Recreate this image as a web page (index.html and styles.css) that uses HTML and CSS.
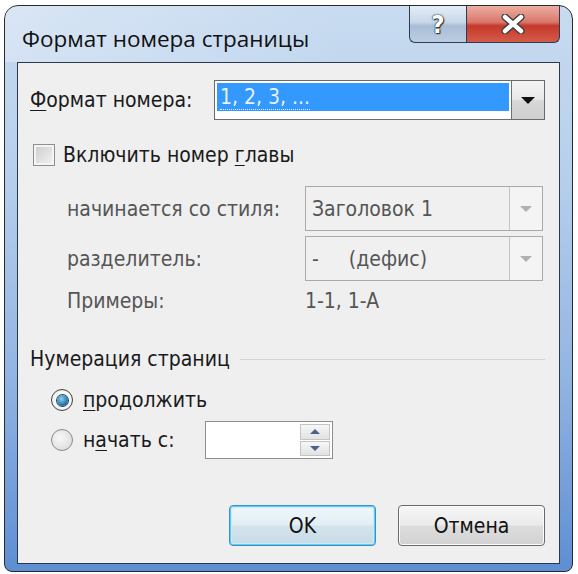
FILE: index.html
```html
<!DOCTYPE html>
<html lang="ru">
<head>
    <meta charset="UTF-8">
    <title>Формат номера страницы</title>
    <link rel="stylesheet" href="styles.css">
</head>
<body>
    <div class="window">
        <div class="titlebar">
            <div class="title">Формат номера страницы</div>
            <div class="caption-buttons">
                <div class="cap-btn help">?</div>
                <div class="cap-btn close">
                    <svg width="26" height="20" viewBox="0 0 26 20">
                        <path d="M5 3 L21 17 M21 3 L5 17" stroke="#3a3a3a" stroke-width="7" stroke-linecap="round"/>
                        <path d="M5 3 L21 17 M21 3 L5 17" stroke="#ffffff" stroke-width="4.5" stroke-linecap="round"/>
                    </svg>
                </div>
            </div>
        </div>
        <div class="panel">
            <div class="format-row">
                <span class="label"><u>Ф</u>ормат номера:</span>
                <div class="combo combo-active">
                    <div class="combo-value"><span class="focus-text">1, 2, 3, ...</span></div>
                    <div class="combo-btn"><span class="tri"></span></div>
                </div>
            </div>

            <div class="check-row">
                <span class="checkbox"></span>
                <span>Включить номер <u>г</u>лавы</span>
            </div>

            <div class="sub-grid">
                <span class="muted">начинается со стиля:</span>
                <div class="combo combo-disabled">
                    <div class="combo-value">Заголовок 1</div>
                    <div class="combo-btn"><span class="tri"></span></div>
                </div>
                <span class="muted">разделитель:</span>
                <div class="combo combo-disabled">
                    <div class="combo-value">-&nbsp;&nbsp;&nbsp;&nbsp;&nbsp;(дефис)</div>
                    <div class="combo-btn"><span class="tri"></span></div>
                </div>
                <span class="muted example-row">Примеры:</span>
                <span class="muted example-row">1-1, 1-A</span>
            </div>

            <div class="group-title">
                <span>Нумерация страниц</span>
                <span class="group-line"></span>
            </div>

            <div class="radio-row first">
                <span class="radio checked"></span>
                <span><u>п</u>родолжить</span>
            </div>
            <div class="radio-row second">
                <span class="radio"></span>
                <span class="radio-label">н<u>а</u>чать с:</span>
                <div class="spinner">
                    <div class="spin-field"></div>
                    <div class="spin-btns">
                        <div class="spin-btn"><span class="arrow-up"></span></div>
                        <div class="spin-btn"><span class="arrow-down"></span></div>
                    </div>
                </div>
            </div>

            <div class="buttons">
                <div class="btn btn-default">OK</div>
                <div class="btn">Отмена</div>
            </div>
        </div>
    </div>
</body>
</html>
```

FILE: styles.css
```css
body {
    margin: 0;
    background: #ffffff;
    font-family: "DejaVu Sans Condensed", "DejaVu Sans", sans-serif;
    font-stretch: condensed;
    color: #1a1a1a;
}
.window {
    margin: 5px 0 0 4px;
    width: 569px;
    height: 567px;
    border: 1px solid #2a2a2a;
    border-radius: 14px 14px 8px 8px;
    background: linear-gradient(to bottom, #c8dbf0 0%, #b6cfec 30%, #93b5e2 65%, #5e8ed3 100%);
    box-sizing: border-box;
    display: flex;
    flex-direction: column;
    overflow: hidden;
}
.titlebar {
    height: 56px;
    display: flex;
    justify-content: space-between;
    align-items: flex-start;
    background: linear-gradient(to right, rgba(255,255,255,0.3), rgba(255,255,255,0) 60%);
}
.title {
    font-family: "Open Sans", sans-serif;
    font-stretch: normal;
    font-size: 22.5px;
    color: #111;
    margin: 17px 0 0 17px;
}
.caption-buttons {
    display: flex;
    margin-right: 12px;
}
.cap-btn {
    height: 37px;
    border: 1px solid #2e3c4d;
    border-top: none;
    box-sizing: border-box;
    display: flex;
    align-items: center;
    justify-content: center;
}
.help {
    width: 57px;
    border-radius: 0 0 0 6px;
    border-right: none;
    background: linear-gradient(to bottom, #e4edf7 0%, #c8d7ea 45%, #a9bdd6 55%, #bccde2 100%);
    font-family: "DejaVu Sans", sans-serif;
    font-weight: bold;
    font-size: 25px;
    color: #fff;
    text-shadow: 0 0 2px #222, 0 0 1px #222, 1px 1px 1px #333;
}
.close {
    width: 94px;
    border-radius: 0 0 6px 0;
    background: linear-gradient(to bottom, #ecaea2 0%, #d9776a 45%, #c4392a 55%, #d45b4b 100%);
}
.panel {
    margin: 0 12px 0 12px;
    height: 502px;
    border: 1px solid #2a3a4e;
    background: #efefef;
    box-sizing: border-box;
    padding: 0 14px 0 12px;
    font-size: 21px;
    display: flex;
    flex-direction: column;
}
u {
    text-decoration-thickness: 1px;
    text-underline-offset: 3px;
}
.format-row {
    margin-top: 17px;
    display: flex;
    align-items: center;
    justify-content: space-between;
}
.combo {
    display: flex;
    box-sizing: border-box;
}
.combo-active {
    width: 331px;
    height: 40px;
    border: 1px solid #6b6b6b;
    background: #fff;
}
.combo-active .combo-value {
    flex: 1;
    margin: 2px 2px 8px 2px;
    background: #3399ff;
    color: #e8f1ff;
    padding-left: 3px;
    display: flex;
    align-items: center;
}
.focus-text {
    border-bottom: 1px dotted #e8f1ff;
    line-height: 24px;
}
.combo-btn {
    width: 33px;
    display: flex;
    align-items: center;
    justify-content: center;
    box-sizing: border-box;
}
.combo-active .combo-btn {
    border-left: 1px solid #707070;
    background: linear-gradient(to bottom, #f4f4f4 0%, #e8e8e8 50%, #d8d8d8 51%, #cfcfcf 100%);
}
.tri {
    width: 0;
    height: 0;
    border-left: 7px solid transparent;
    border-right: 7px solid transparent;
    border-top: 7px solid #111;
}
.check-row {
    margin-top: 23px;
    display: flex;
    align-items: center;
    gap: 8px;
    padding-left: 3px;
}
.checkbox {
    width: 22px;
    height: 22px;
    box-sizing: border-box;
    border: 1px solid #8e8f8f;
    background: linear-gradient(135deg, #cbcbcb, #f4f4f4);
    box-shadow: inset 0 0 0 2px #f4f4f4;
}
.sub-grid {
    margin-top: 19px;
    margin-left: 37px;
    display: grid;
    grid-template-columns: 238px 238px;
    row-gap: 5px;
    align-items: center;
}
.muted {
    color: #555;
}
.combo-disabled {
    height: 45px;
    border: 1px solid #a9a9a9;
    background: #f0f0f0;
    color: #555;
}
.combo-disabled .combo-value {
    flex: 1;
    display: flex;
    align-items: center;
    padding-left: 6px;
}
.combo-disabled .combo-btn {
    border-left: 1px solid #c5c5c5;
    background: #f4f4f4;
}
.combo-disabled .tri {
    border-left-width: 6px;
    border-right-width: 6px;
    border-top: 6px solid #b0b0b0;
}
.example-row {
    margin-top: 3px;
}
.group-title {
    margin-top: 34px;
    display: flex;
    align-items: center;
    gap: 10px;
}
.group-line {
    flex: 1;
    height: 1px;
    background: #d5d5d5;
}
.radio-row {
    display: flex;
    align-items: center;
    padding-left: 21px;
    gap: 10px;
}
.radio-row.first {
    margin-top: 17px;
}
.radio-row.second {
    margin-top: 9px;
}
.radio {
    width: 22px;
    height: 22px;
    border-radius: 50%;
    box-sizing: border-box;
    border: 1px solid #8a8a8a;
    background: radial-gradient(circle at 40% 40%, #f8f8f8, #d6d6d6);
    display: flex;
    align-items: center;
    justify-content: center;
}
.radio.checked {
    border-color: #444;
    background: radial-gradient(circle, #fafafa 55%, #cfcfcf 100%);
}
.radio.checked::after {
    content: "";
    width: 11px;
    height: 11px;
    border-radius: 50%;
    background: radial-gradient(circle at 40% 35%, #8fd0f0, #2a79ad 60%, #0f3f63);
    box-shadow: 0 0 0 1px #1c4a6d;
}
.radio-label {
    width: 112px;
}
.spinner {
    width: 128px;
    height: 38px;
    border: 1px solid #8d8d8d;
    background: #fff;
    display: flex;
    box-sizing: border-box;
}
.spin-field {
    flex: 1;
}
.spin-btns {
    width: 30px;
    margin: 2px 2px 2px 0;
    display: flex;
    flex-direction: column;
    gap: 1px;
}
.spin-btn {
    flex: 1;
    border: 1px solid #c4c4c4;
    background: linear-gradient(to bottom, #f7f7f7, #e2e2e2);
    display: flex;
    align-items: center;
    justify-content: center;
}
.arrow-up {
    width: 0;
    height: 0;
    border-left: 5px solid transparent;
    border-right: 5px solid transparent;
    border-bottom: 5px solid #4a6384;
}
.arrow-down {
    width: 0;
    height: 0;
    border-left: 5px solid transparent;
    border-right: 5px solid transparent;
    border-top: 5px solid #4a6384;
}
.buttons {
    margin-top: 46px;
    display: flex;
    justify-content: flex-end;
    gap: 22px;
}
.btn {
    width: 147px;
    height: 41px;
    box-sizing: border-box;
    border: 1px solid #6a6a6a;
    border-radius: 4px;
    background: linear-gradient(to bottom, #f6f6f6 0%, #ebebeb 48%, #dddddd 52%, #d2d2d2 100%);
    box-shadow: inset 0 0 0 1px #fcfcfc;
    display: flex;
    align-items: center;
    justify-content: center;
    color: #111;
}
.btn-default {
    border-color: #3c8fbf;
    box-shadow: inset 0 0 0 1px #5fd0f5, inset 0 0 0 2px #c6ecfb;
    background: linear-gradient(to bottom, #f0f7fb 0%, #e3eef4 48%, #d3e3ec 52%, #c8dbe6 100%);
}
```
